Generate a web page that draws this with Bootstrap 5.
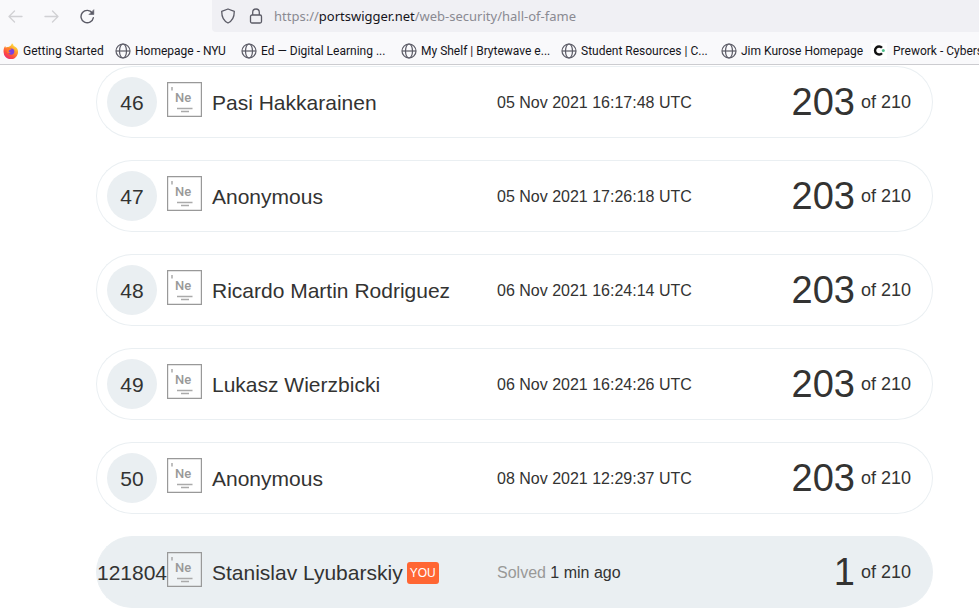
<!DOCTYPE html>
<html lang="en">
<head>
<meta charset="utf-8">
<meta name="viewport" content="width=device-width, initial-scale=1">
<title>Hall of Fame</title>
<link href="https://cdn.jsdelivr.net/npm/bootstrap@5.3.0/dist/css/bootstrap.min.css" rel="stylesheet">
<style>
  body { font-family: "Liberation Sans", Arial, sans-serif; color: #333332; background: #fff; }
  .chrome { background: #f9f9fb; border-bottom: 1px solid #ccccd0; color: #15141a; }
  .toolbar { height: 32px; }
  .nav-tools { width: 212px; }
  .tool { width: 32px; height: 32px; color: #5b5b66; }
  .tool:disabled { color: #bcbcc0; }
  .tools-gap { gap: 4px; }
  .address { background: #f0f0f4; border-bottom-left-radius: 4px; color: #5b5b66; padding-left: 8px; }
  .address a { font-family: "Noto Sans", "Open Sans", sans-serif; font-size: 13px; color: #8a8a92; margin-left: 10px; padding-top: 2px; }
  .address b { font-weight: 400; color: #15141a; }
  .bookmarks { height: 32px; display: grid; grid-template-columns: 112px 126px 160px 160px 160px 150px 160px; padding-left: 3px; padding-top: 5px; font-family: Roboto, "Open Sans", sans-serif; font-size: 12px; }
  .bookmarks a { color: #15141a; gap: 4px; }
  .bookmarks svg { flex: none; }
  .fame-area { padding: 0 46px 0 96px; }
  .fame { border-collapse: separate; border-spacing: 0 22px; margin-top: -21px; table-layout: fixed; }
  .fame tr { height: 72px; }
  .fame td, .fame th { padding: 0; border: solid #eaeff2; border-width: 1px 0; vertical-align: middle; font-weight: 400; white-space: nowrap; }
  .fame .rank { border-left-width: 1px; border-radius: 36px 0 0 36px; font-size: 21px; }
  .fame .score { border-right-width: 1px; border-radius: 0 36px 36px 0; padding-right: 21px; font-size: 18px; }
  .c-rank { width: 71px; }
  .c-name { width: 330px; }
  .c-score { width: 200px; }
  .disc { width: 50px; height: 50px; background: #eaeff2; padding-top: 2px; }
  .who { font-size: 21px; gap: 10px; padding-top: 2px; }
  .level { flex: none; margin-bottom: 8px; }
  .fame .when { font-size: 16px; padding-top: 2px; }
  .tally { gap: 6px; }
  .points { font-size: 38px; line-height: 44px; }
  .me td, .me th { background: #eaeff2; }
  .you { background: #ff6633; color: #fff; font-size: 12px; line-height: 22px; border-radius: 3px; padding: 0 3px; margin-left: -6px; }
  .sym { font: 500 13px Roboto, sans-serif; }
  .muted { color: #999998; }
</style>
</head>
<body>
<svg class="d-none" aria-hidden="true">
  <symbol id="globe" viewBox="0 0 16 16"><g fill="none" stroke="#5b5b66" stroke-width="1.2"><circle cx="8" cy="8" r="7"/><ellipse cx="8" cy="8" rx="3.5" ry="7"/><path d="M1 8h14"/></g></symbol>
  <symbol id="newbie" viewBox="0 0 35 35"><path d="M.5.5h34v34H.5z" fill="#fff" fill-opacity=".25" stroke="#999" stroke-width="1.4"/><path d="M5 5v3.500M10 26.500h15.500M14 29.500h8" stroke="#aaa" stroke-width="1.5"/><text x="8" y="20" fill="#999" class="sym">Ne</text></symbol>
</svg>
<div class="vh-100 overflow-hidden">
  <header class="chrome">
    <div class="toolbar d-flex">
      <div class="nav-tools d-flex tools-gap">
        <button class="tool btn border-0 p-0 d-flex align-items-center justify-content-center" disabled aria-label="Back"><svg width="16" height="16" fill="none" stroke="currentColor" stroke-width="1.3" stroke-linecap="round" stroke-linejoin="round"><path d="M14 8.500H1M6.500 3 1 8.500 6.500 14"/></svg></button>
        <button class="tool btn border-0 p-0 d-flex align-items-center justify-content-center" disabled aria-label="Forward"><svg width="16" height="16" fill="none" stroke="currentColor" stroke-width="1.3" stroke-linecap="round" stroke-linejoin="round"><path d="M1 8.500h13M8.500 3 14 8.500 8.500 14"/></svg></button>
        <button class="tool btn border-0 p-0 d-flex align-items-center justify-content-center" aria-label="Reload"><svg width="16" height="16" fill="none" stroke="currentColor" stroke-width="1.4" stroke-linecap="round"><path d="M12.300 5A6.200 6.200 0 1 0 13.300 9.800"/><path d="M13.800 2v4.500H9.300z" fill="currentColor" stroke-width=".6"/></svg></button>
      </div>
      <div class="address flex-grow-1 d-flex align-items-center">
        <svg width="16" height="16" fill="none" stroke="currentColor" stroke-width="1.3" stroke-linejoin="round"><path d="M8 1 14.300 3.300C14.300 9.500 12 13.200 8 15 4 13.200 1.700 9.500 1.700 3.300Z"/></svg>
        <svg class="ms-2 ps-1" width="20" height="16" viewBox="0 0 16 16" fill="none" stroke="currentColor" stroke-width="1.3"><rect x="2.500" y="7" width="11" height="8" rx="1.500"/><path d="M4.700 7V4.300a3.300 3.300 0 0 1 6.600 0V7"/></svg>
        <a class="text-decoration-none text-nowrap" href="#">https://<b>portswigger.net</b>/web-security/hall-of-fame</a>
      </div>
    </div>
    <nav class="bookmarks align-items-center overflow-hidden text-nowrap" aria-label="Bookmarks">
      <a class="d-flex align-items-center text-decoration-none" href="#"><svg width="16" height="16"><defs><linearGradient id="ff" x1=".8" y1="0" x2=".2" y2="1"><stop offset="0" stop-color="#fff44f"/><stop offset=".35" stop-color="#ffa12a"/><stop offset=".7" stop-color="#ff4f3c"/><stop offset="1" stop-color="#e7247d"/></linearGradient></defs><path d="M9 .2c1 .8 1.500 1.800 1.700 2.700 1.500.3 3 1.700 3.700 3 .7 1.300.8 3.200.4 4.800A7.200 7.200 0 0 1 .6 9.200C.3 7 .9 4.500 2.300 3l.3 1.500c.8-.5 1.500-.7 2.700-.6C6.800 3.500 8.600 2 9 .2Z" fill="url(#ff)"/><circle cx="8.200" cy="8.600" r="3.100" fill="#7a41e0"/><path d="M4.800 5.300c1.500-.5 2.500 0 3.600.9-.7.800-2 .8-2.600 1.600-.4 1 .6 1.800 2 1.600-1.200 1.500-3.800.7-4-1.500" fill="#ff7b2f"/></svg>Getting Started</a>
      <a class="d-flex align-items-center text-decoration-none" href="#"><svg width="16" height="16"><use href="#globe"/></svg>Homepage - NYU</a>
      <a class="d-flex align-items-center text-decoration-none" href="#"><svg width="16" height="16"><use href="#globe"/></svg>Ed — Digital Learning ...</a>
      <a class="d-flex align-items-center text-decoration-none" href="#"><svg width="16" height="16"><use href="#globe"/></svg>My Shelf | Brytewave e...</a>
      <a class="d-flex align-items-center text-decoration-none" href="#"><svg width="16" height="16"><use href="#globe"/></svg>Student Resources | C...</a>
      <a class="d-flex align-items-center text-decoration-none" href="#"><svg width="16" height="16"><use href="#globe"/></svg>Jim Kurose Homepage</a>
      <a class="d-flex align-items-center text-decoration-none" href="#"><svg width="18" height="16"><path fill="#fff" d="M0 0h16v16H0z"/><path d="M11 4.800A4 4 0 1 0 11 10.200" fill="none" stroke="#111" stroke-width="2.400"/><circle cx="12.300" cy="7.500" r="1.500" fill="#4fbf8b"/></svg>Prework - Cybersecurity</a>
    </nav>
  </header>
  <main class="fame-area">
    <table class="fame w-100">
      <colgroup><col class="c-rank"><col class="c-name"><col><col class="c-score"></colgroup>
      <tbody>
        <tr><td class="rank"><div class="disc rounded-circle mx-auto d-flex align-items-center justify-content-center">46</div></td><th scope="row"><div class="who d-flex align-items-center"><svg class="level" width="35" height="35"><use href="#newbie"/></svg>Pasi Hakkarainen</div></th><td class="when">05 Nov 2021 16:17:48 UTC</td><td class="score"><div class="tally d-flex align-items-center justify-content-end"><span class="points">203</span> of 210</div></td></tr>
        <tr><td class="rank"><div class="disc rounded-circle mx-auto d-flex align-items-center justify-content-center">47</div></td><th scope="row"><div class="who d-flex align-items-center"><svg class="level" width="35" height="35"><use href="#newbie"/></svg>Anonymous</div></th><td class="when">05 Nov 2021 17:26:18 UTC</td><td class="score"><div class="tally d-flex align-items-center justify-content-end"><span class="points">203</span> of 210</div></td></tr>
        <tr><td class="rank"><div class="disc rounded-circle mx-auto d-flex align-items-center justify-content-center">48</div></td><th scope="row"><div class="who d-flex align-items-center"><svg class="level" width="35" height="35"><use href="#newbie"/></svg>Ricardo Martin Rodriguez</div></th><td class="when">06 Nov 2021 16:24:14 UTC</td><td class="score"><div class="tally d-flex align-items-center justify-content-end"><span class="points">203</span> of 210</div></td></tr>
        <tr><td class="rank"><div class="disc rounded-circle mx-auto d-flex align-items-center justify-content-center">49</div></td><th scope="row"><div class="who d-flex align-items-center"><svg class="level" width="35" height="35"><use href="#newbie"/></svg>Lukasz Wierzbicki</div></th><td class="when">06 Nov 2021 16:24:26 UTC</td><td class="score"><div class="tally d-flex align-items-center justify-content-end"><span class="points">203</span> of 210</div></td></tr>
        <tr><td class="rank"><div class="disc rounded-circle mx-auto d-flex align-items-center justify-content-center">50</div></td><th scope="row"><div class="who d-flex align-items-center"><svg class="level" width="35" height="35"><use href="#newbie"/></svg>Anonymous</div></th><td class="when">08 Nov 2021 12:29:37 UTC</td><td class="score"><div class="tally d-flex align-items-center justify-content-end"><span class="points">203</span> of 210</div></td></tr>
        <tr class="me"><td class="rank"><div class="disc rounded-circle mx-auto d-flex align-items-center justify-content-center">121804</div></td><th scope="row"><div class="who d-flex align-items-center"><svg class="level" width="35" height="35"><use href="#newbie"/></svg>Stanislav Lyubarskiy<span class="you">YOU</span></div></th><td class="when"><span class="muted">Solved</span> 1 min ago</td><td class="score"><div class="tally d-flex align-items-center justify-content-end"><span class="points">1</span> of 210</div></td></tr>
      </tbody>
    </table>
  </main>
</div>
<script src="https://cdn.jsdelivr.net/npm/bootstrap@5.3.0/dist/js/bootstrap.bundle.min.js"></script>
</body>
</html>
